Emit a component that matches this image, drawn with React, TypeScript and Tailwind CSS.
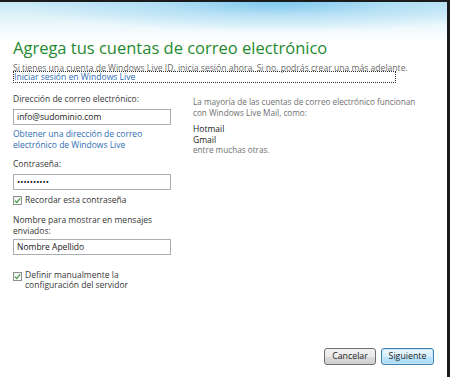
import React from 'react';

function Check() {
  return (
    <span className="flex h-[9px] w-[9px] shrink-0 items-center justify-center border border-[#8e8f8f] bg-[linear-gradient(#f2f2f2,#ffffff)]">
      <svg width="7" height="7" viewBox="0 0 8 8" fill="none">
        <path d="M1 4.2 L3.1 6.3 L7 1.5" stroke="#3d9a3d" strokeWidth="1.4" />
      </svg>
    </span>
  );
}

function TextBox({ value }: { value: string }) {
  return (
    <div className="flex h-[16px] w-[158px] items-center border border-[#abadb3] bg-white px-[3px] text-[8.5px] text-[#222]">
      {value}
    </div>
  );
}

export default function App() {
  return (
    <div
      className="h-[377px] w-[450px] overflow-hidden border-t-2 border-r-[3px] border-[#1b1b1b] bg-white"
      style={{ fontFamily: '"Open Sans", "Noto Sans", sans-serif' }}
    >
      <div className="flex h-full flex-col bg-[radial-gradient(ellipse_260px_30px_at_62%_0px,#7ec8ee_0%,rgba(160,215,242,0.6)_45%,rgba(255,255,255,0)_100%),linear-gradient(#c6e8f7_0px,#e6f5fb_18px,#ffffff_40px)] pl-[13px]">
        {/* Header */}
        <h1 className="mt-[36px] text-[16.5px] leading-[20px] text-[#1f8a2f]">
          Agrega tus cuentas de correo electrónico
        </h1>
        <p className="mt-[6px] text-[8.6px] leading-[8px] text-[#6b6b6b]">
          Si tienes una cuenta de Windows Live ID, inicia sesión ahora. Si no, podrás crear una más adelante.
        </p>
        <div className="-mt-[1px] w-[383px] border border-dotted border-[#333] text-[8.6px] leading-[10px] text-[#2f6db3]">
          Iniciar sesión en Windows Live
        </div>

        {/* Body */}
        <div className="mt-[10px] flex">
          <div className="flex w-[180px] flex-col text-[8.5px] text-[#383838]">
            <span className="leading-[12px]">Dirección de correo electrónico:</span>
            <div className="mt-[4px]">
              <TextBox value="info@sudominio.com" />
            </div>
            <span className="mt-[3px] leading-[11px] text-[#2f6db3]">
              Obtener una dirección de correo
              <br />
              electrónico de Windows Live
            </span>
            <span className="mt-[8px] leading-[12px]">Contraseña:</span>
            <div className="mt-[4px]">
              <TextBox value="••••••••••" />
            </div>
            <div className="mt-[5px] flex items-center gap-[3px] leading-[10px]">
              <Check />
              <span>Recordar esta contraseña</span>
            </div>
            <span className="mt-[9px] leading-[11px]">
              Nombre para mostrar en mensajes
              <br />
              enviados:
            </span>
            <div className="mt-[3px]">
              <TextBox value="Nombre Apellido" />
            </div>
            <div className="mt-[15px] flex items-start gap-[3px] leading-[10px]">
              <span className="mt-[2px]">
                <Check />
              </span>
              <span>
                Definir manualmente la
                <br />
                configuración del servidor
              </span>
            </div>
          </div>

          <div className="mt-[4px] flex flex-col text-[8.2px] leading-[10.5px] text-[#707070]">
            <span>
              La mayoría de las cuentas de correo electrónico funcionan
              <br />
              con Windows Live Mail, como:
            </span>
            <span className="mt-[6px] text-[8.5px] text-[#222]">Hotmail</span>
            <span className="text-[8.5px] text-[#222]">Gmail</span>
            <span>entre muchas otras.</span>
          </div>
        </div>

        {/* Buttons */}
        <div className="mt-auto mb-[12px] flex justify-end gap-[5px] pr-[13px]">
          <button className="h-[17px] w-[52px] rounded-[3px] border border-[#707070] bg-[linear-gradient(#f2f2f2_0%,#ebebeb_50%,#dddddd_51%,#cfcfcf_100%)] text-[8.8px] text-[#222]">
            Cancelar
          </button>
          <button className="h-[17px] w-[53px] rounded-[3px] border border-[#3c7fb1] bg-[linear-gradient(#eaf6fd_0%,#d9f0fc_50%,#bee6fd_51%,#a7d9f5_100%)] text-[8.8px] text-[#222] shadow-[inset_0_0_0_1px_#c6e8f8]">
            Siguiente
          </button>
        </div>
      </div>
    </div>
  );
}
